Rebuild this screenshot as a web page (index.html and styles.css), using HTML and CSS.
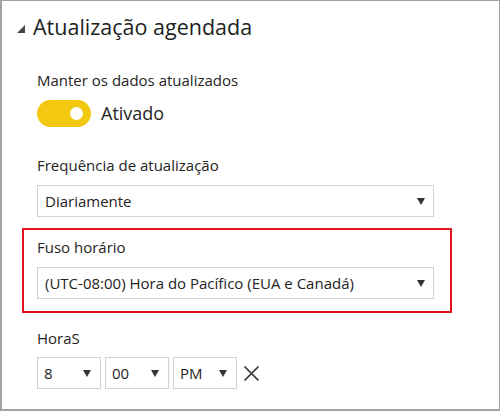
FILE: index.html
```html
<!DOCTYPE html>
<html lang="pt">
<head>
<meta charset="utf-8">
<title>Atualização agendada</title>
<link rel="stylesheet" href="styles.css">
</head>
<body>
<div class="panel">
  <div class="header">
    <svg class="caret" width="8" height="8" viewBox="0 0 8 8"><polygon points="0,8 8,0 8,8" fill="#444"/></svg>
    <span class="title">Atualização agendada</span>
  </div>

  <div class="section">
    <div class="label label-first">Manter os dados atualizados</div>
    <div class="toggle-row">
      <span class="toggle"><span class="knob"></span></span>
      <span class="toggle-text">Ativado</span>
    </div>
  </div>

  <div class="section">
    <div class="label label-freq">Frequência de atualização</div>
    <div class="select">
      <span>Diariamente</span>
      <svg class="arrow" width="8" height="7" viewBox="0 0 8 7"><polygon points="0,0 8,0 4,7" fill="#333"/></svg>
    </div>
  </div>

  <div class="section highlight">
    <div class="label">Fuso horário</div>
    <div class="select">
      <span>(UTC-08:00) Hora do Pacífico (EUA e Canadá)</span>
      <svg class="arrow" width="8" height="7" viewBox="0 0 8 7"><polygon points="0,0 8,0 4,7" fill="#333"/></svg>
    </div>
  </div>

  <div class="section">
    <div class="label label-hours">HoraS</div>
    <div class="time-row">
      <div class="select small">
        <span>8</span>
        <svg class="arrow" width="8" height="7" viewBox="0 0 8 7"><polygon points="0,0 8,0 4,7" fill="#333"/></svg>
      </div>
      <div class="select small">
        <span>00</span>
        <svg class="arrow" width="8" height="7" viewBox="0 0 8 7"><polygon points="0,0 8,0 4,7" fill="#333"/></svg>
      </div>
      <div class="select small">
        <span>PM</span>
        <svg class="arrow" width="8" height="7" viewBox="0 0 8 7"><polygon points="0,0 8,0 4,7" fill="#333"/></svg>
      </div>
      <svg class="close" width="17" height="17" viewBox="0 0 17 17"><path d="M1.5 1.5 L15.5 15.5 M15.5 1.5 L1.5 15.5" stroke="#333" stroke-width="1.7" fill="none"/></svg>
    </div>
  </div>
</div>
</body>
</html>
```

FILE: styles.css
```css
* { box-sizing: border-box; }

html, body {
  margin: 0;
  padding: 0;
  background: #ffffff;
}

body {
  font-family: "Open Sans", "Noto Sans", sans-serif;
  color: #252423;
}

.panel {
  width: 500px;
  height: 411px;
  border: 1px solid #a3a3a3;
  border-left-width: 2px;
  border-bottom-width: 2px;
  padding-top: 11px;
  overflow: hidden;
}

.header {
  display: flex;
  align-items: center;
  height: 30px;
  padding-left: 15px;
}

.caret {
  margin-top: 3px;
  margin-right: 8px;
}

.title {
  font-size: 21.5px;
  line-height: 30px;
  color: #201f1e;
}

.section {
  margin-left: 20px;
  width: 430px;
  padding: 0 16px 0 13px;
  border: 2px solid transparent;
  border-top-width: 0;
  border-bottom-width: 0;
}

.label {
  font-size: 15px;
  line-height: 20px;
  color: #252423;
}

.label-first { margin-top: 28px; }
.label-freq { margin-top: 28px; }
.label-hours { margin-top: 15px; }

.toggle-row {
  display: flex;
  align-items: center;
  height: 27px;
  margin-top: 10px;
}

.toggle {
  position: relative;
  display: inline-block;
  width: 54px;
  height: 27px;
  border-radius: 14px;
  background: #f2c811;
}

.knob {
  position: absolute;
  top: 7px;
  left: 33px;
  width: 13px;
  height: 13px;
  border-radius: 50%;
  background: #ffffff;
}

.toggle-text {
  margin-left: 10px;
  font-size: 18px;
  line-height: 27px;
}

.select {
  display: flex;
  align-items: center;
  justify-content: space-between;
  height: 32px;
  margin-top: 10px;
  padding: 0 8px 0 7px;
  border: 1px solid #d2d2d2;
  font-size: 15px;
  color: #252423;
  background: #fff;
}

.highlight {
  border: 2px solid #e3131d;
  margin-top: 11px;
  padding-top: 7px;
  padding-bottom: 12px;
}

.time-row {
  display: flex;
  align-items: center;
  gap: 4px;
  margin-top: 9px;
}

.select.small {
  width: 64px;
  margin-top: 0;
  padding: 0 9px 0 6px;
}

.close {
  margin-left: 2px;
}
```
